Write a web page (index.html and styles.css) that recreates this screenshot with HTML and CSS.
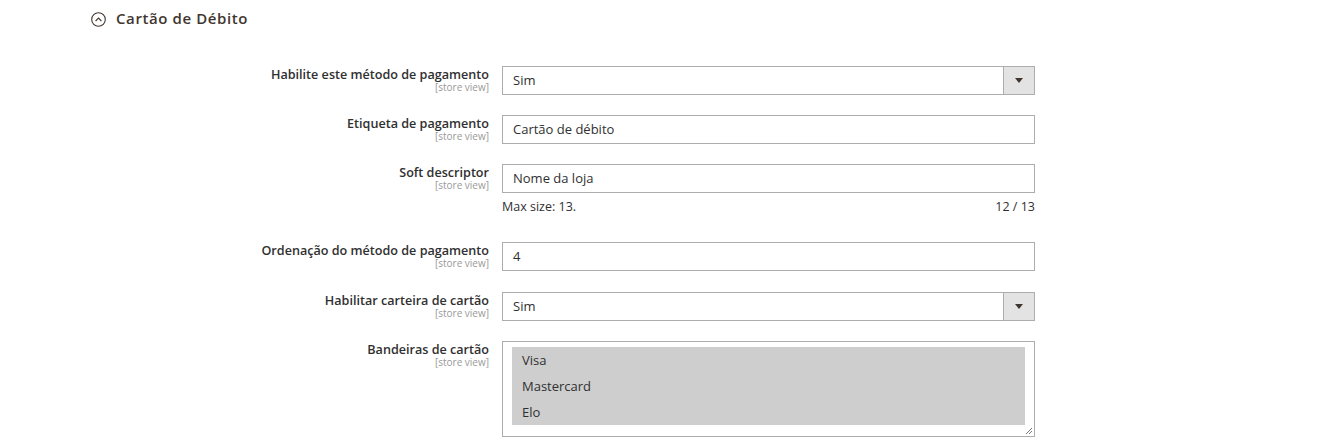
FILE: index.html
```html
<!DOCTYPE html>
<html lang="pt-BR">
<head>
    <meta charset="UTF-8">
    <meta name="viewport" content="width=device-width, initial-scale=1.0">
    <title>Cartão de Débito</title>
    <link rel="stylesheet" href="styles.css">
</head>

<body>
    <section class="group">
        <h2 class="group-title">
            <svg class="toggle" width="15" height="15" viewBox="0 0 15 15">
                <circle cx="7.5" cy="7.5" r="6.8" fill="none" stroke="#41362f" stroke-width="1.1"/>
                <path d="M4.6 9 L7.5 6.1 L10.4 9" fill="none" stroke="#41362f" stroke-width="1.1"/>
            </svg>
            Cartão de Débito
        </h2>

        <div class="fieldset">
            <div class="row">
                <div class="label">Habilite este método de pagamento<span class="scope">[store view]</span></div>
                <div class="control">
                    <div class="select"><span>Sim</span><span class="arrow"></span></div>
                </div>
            </div>

            <div class="row">
                <div class="label">Etiqueta de pagamento<span class="scope">[store view]</span></div>
                <div class="control">
                    <div class="input">Cartão de débito</div>
                </div>
            </div>

            <div class="row">
                <div class="label">Soft descriptor<span class="scope">[store view]</span></div>
                <div class="control">
                    <div class="input">Nome da loja</div>
                    <div class="note"><span>Max size: 13.</span><span>12 / 13</span></div>
                </div>
            </div>

            <div class="row row-wide">
                <div class="label">Ordenação do método de pagamento<span class="scope">[store view]</span></div>
                <div class="control">
                    <div class="input">4</div>
                </div>
            </div>

            <div class="row">
                <div class="label">Habilitar carteira de cartão<span class="scope">[store view]</span></div>
                <div class="control">
                    <div class="select"><span>Sim</span><span class="arrow"></span></div>
                </div>
            </div>

            <div class="row">
                <div class="label">Bandeiras de cartão<span class="scope">[store view]</span></div>
                <div class="control">
                    <div class="multiselect">
                        <div class="options">
                            <div class="option">Visa</div>
                            <div class="option">Mastercard</div>
                            <div class="option">Elo</div>
                        </div>
                        <svg class="grip" width="9" height="9" viewBox="0 0 9 9">
                            <path d="M8 2 L2 8 M8 5 L5 8" stroke="#777" stroke-width="1"/>
                        </svg>
                    </div>
                </div>
            </div>
        </div>
    </section>
</body>
</html>
```

FILE: styles.css
```css
body {
    margin: 0;
    background-color: #ffffff;
    font-family: "Open Sans", "Liberation Sans", sans-serif;
    color: #303030;
}

.group {
    padding-left: 91px;
}

.group-title {
    display: flex;
    align-items: center;
    gap: 10px;
    margin: 0;
    padding-top: 9px;
    height: 18px;
    font-size: 15px;
    font-weight: 600;
    letter-spacing: 0.6px;
    color: #41362f;
}

.toggle {
    margin-top: 2px;
}

.fieldset {
    padding-top: 39px;
}

.row {
    display: flex;
    margin-bottom: 20px;
}

.row-wide {
    margin-bottom: 21px;
}

.label {
    width: 398px;
    padding-top: 2px;
    text-align: right;
    font-size: 12.6px;
    font-weight: 600;
    line-height: 14px;
    color: #303030;
}

.scope {
    display: block;
    font-size: 10px;
    font-weight: 400;
    line-height: 11px;
    color: #999999;
}

.control {
    margin-left: 13px;
    width: 533px;
}

.input,
.select {
    box-sizing: border-box;
    height: 29px;
    border: 1px solid #adadad;
    font-size: 13px;
    line-height: 27px;
    padding-left: 10px;
    color: #303030;
}

.select {
    display: flex;
    justify-content: space-between;
}

.arrow {
    position: relative;
    width: 30px;
    background-color: #e3e3e3;
    border-left: 1px solid #adadad;
}

.arrow::after {
    content: "";
    position: absolute;
    left: 11px;
    top: 11px;
    border-left: 4px solid transparent;
    border-right: 4px solid transparent;
    border-top: 5px solid #41362f;
}

.note {
    display: flex;
    justify-content: space-between;
    padding-top: 7px;
    height: 22px;
    font-size: 12.5px;
    line-height: 14px;
    color: #303030;
}

.multiselect {
    position: relative;
    box-sizing: border-box;
    height: 96px;
    border: 1px solid #adadad;
    padding: 5px 9px 0 9px;
}

.options {
    background-color: #cecece;
}

.option {
    height: 26px;
    line-height: 26px;
    padding-left: 10px;
    font-size: 13px;
    color: #303030;
}

.grip {
    position: absolute;
    right: 1px;
    bottom: 1px;
}
```
